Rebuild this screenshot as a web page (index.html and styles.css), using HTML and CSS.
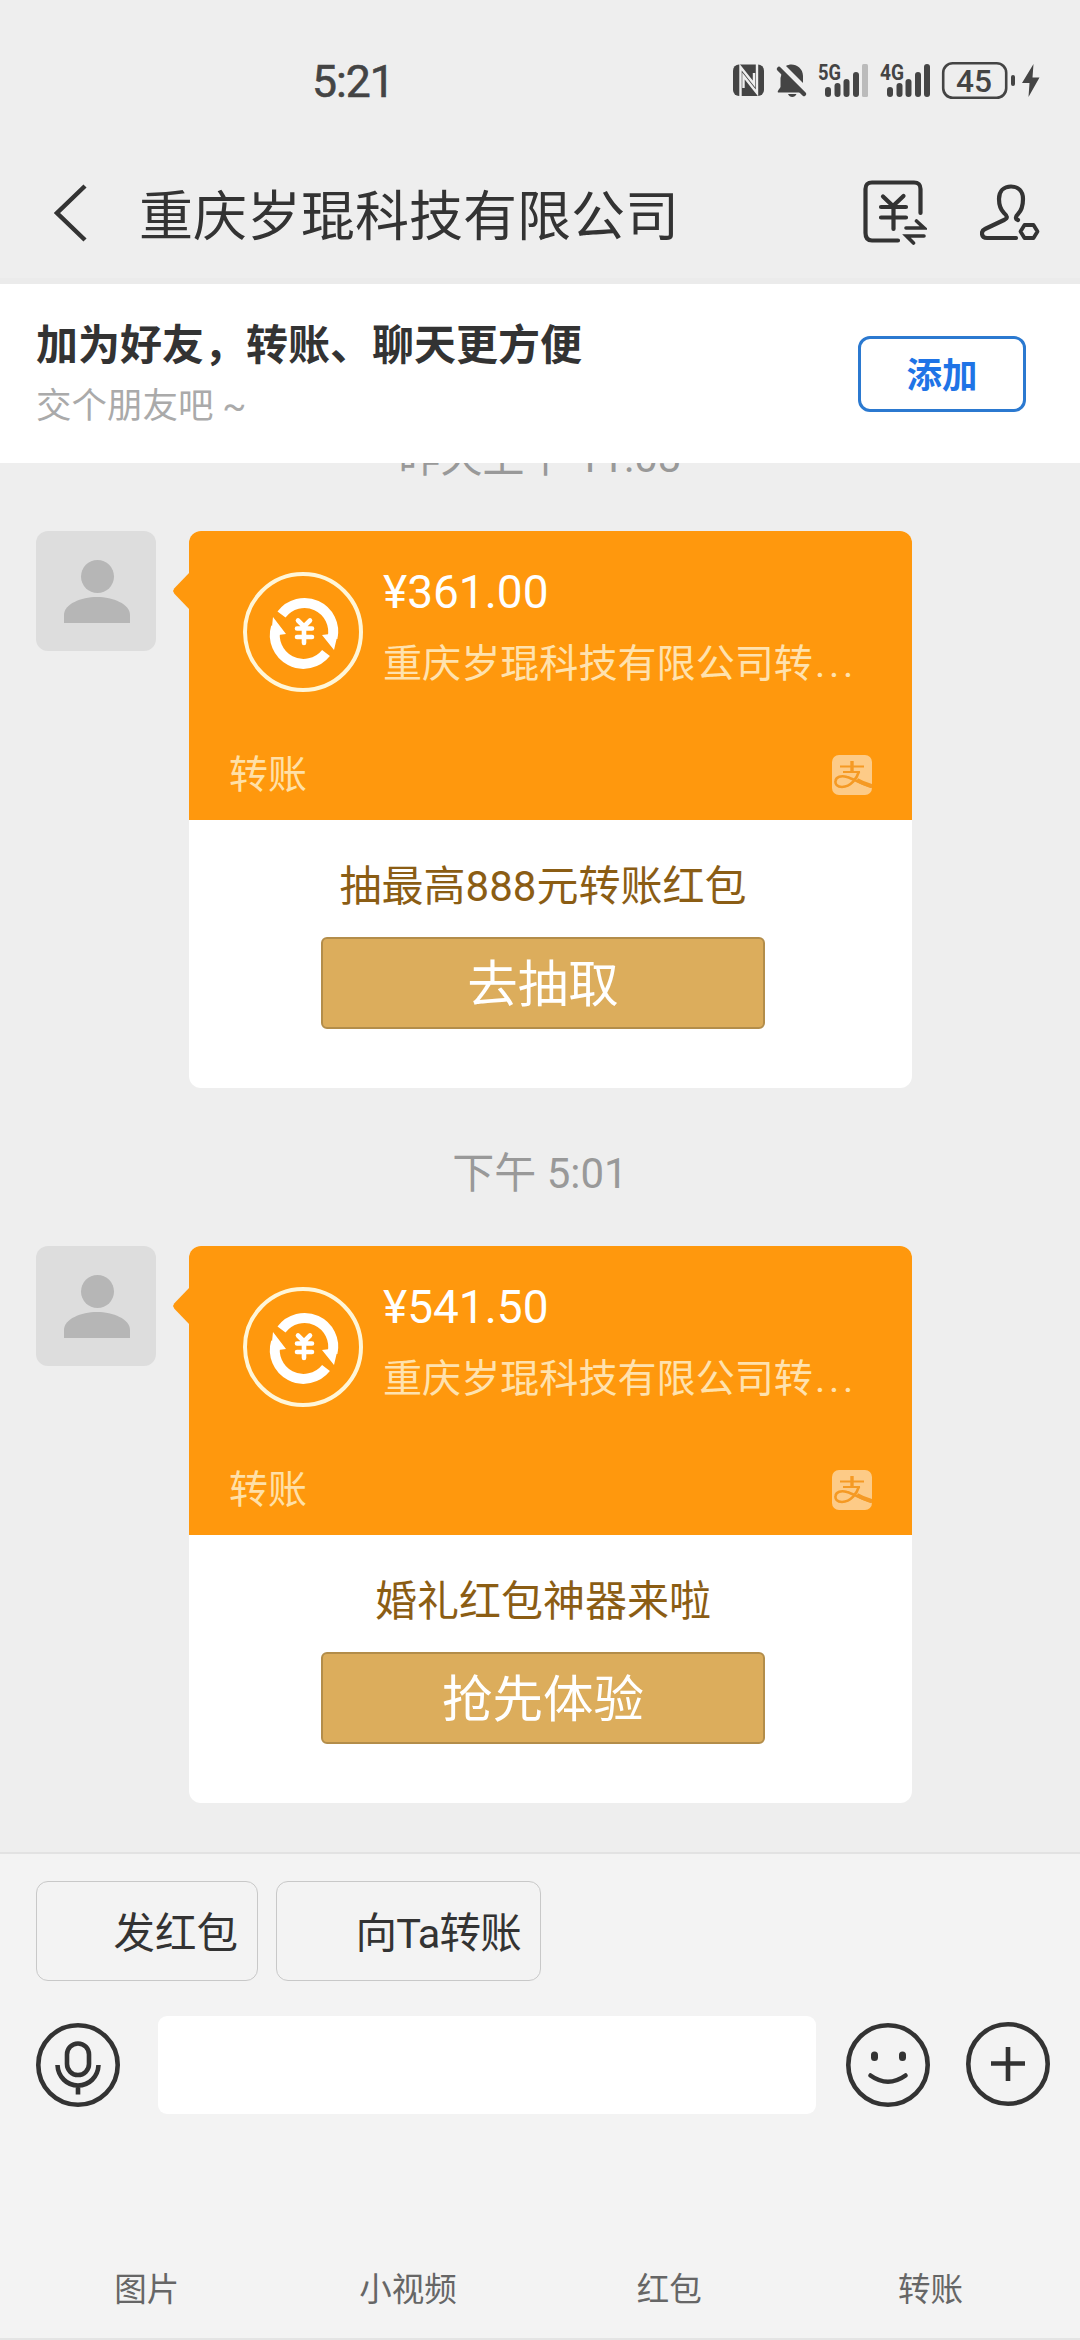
FILE: index.html
```html
<!DOCTYPE html>
<html lang="zh-CN">
<head>
<meta charset="utf-8">
<title>重庆岁琨科技有限公司</title>
<link rel="stylesheet" href="styles.css">
</head>
<body>
<svg class="defs" width="0" height="0">
  <symbol id="user" viewBox="0 0 120 120">
    <circle cx="61.500" cy="45.500" r="16.500"/>
    <path d="M28 92V84C28 73 45 66 61 66S94 73 94 84V92Z"/>
  </symbol>
  <symbol id="transfer" viewBox="0 0 120 120">
    <g fill="none" stroke="#fff">
      <circle cx="60" cy="60" r="58" stroke="#fff6d8" stroke-width="4"/>
      <path d="M38.500 42.500A28.700 28.700 0 0 1 89.500 66" stroke-width="10"/>
      <path d="M83 81A28.700 28.700 0 0 1 33 55" stroke-width="10"/>
      <path d="M55 48.500L61 54.500L67 48.500M54 56.500H69M54 65H69M61 55V71" stroke-width="4.600" stroke-linecap="round" stroke-linejoin="round"/>
    </g>
    <path d="M30 45L43 62L28 64ZM79 63L95 61L91 78Z" fill="#fff"/>
  </symbol>
  <symbol id="alipay" viewBox="0 0 40 40">
    <rect width="40" height="40" rx="7" fill="#fdcb87"/>
    <g fill="none" stroke="#f59a24" stroke-linecap="butt">
      <path d="M20 6V16" stroke-width="3.400"/>
      <path d="M8 11.500H32M11 17H28" stroke-width="2"/>
      <path d="M27 16.500C25 23 19 32 10 32C5 32 3 29 3.500 26C4 22 9 20 15 22C22 24 29 29 40 32" stroke-width="2.600"/>
      <path d="M25 25C30 28 34 29.500 40 31" stroke-width="4"/>
    </g>
  </symbol>
</svg>

<div class="screen">
  <div class="status">
    <time class="clock">5:21</time>
    <svg class="status-icons" viewBox="730 38 312 84" width="312" height="84">
      <g fill="#444">
        <rect x="733" y="64.500" width="31" height="31.500" rx="6"/>
        <path d="M778 92.500C777 91 779.500 89 780.500 87V78L782 72L796 86L802 92.500ZM786 66C792 62 803 66 803 76V83ZM788 94H796.500C795 98 789.500 98 788 94Z"/>
        <path d="M1033.500 64L1022 83H1029.500L1028.500 97L1039.500 77.500H1032.500Z"/>
        <rect x="1011" y="75" width="4" height="11" rx="2"/>
        <rect x="825" y="87" width="6" height="10" rx="3"/>
        <rect x="834.500" y="83" width="6" height="14" rx="3"/>
        <rect x="843.500" y="79" width="6" height="18" rx="3"/>
        <rect x="853" y="72" width="6" height="25" rx="3"/>
        <rect x="862" y="64" width="6" height="33" rx="1.500" fill="#bbb"/>
        <rect x="887" y="87" width="6" height="10" rx="3"/>
        <rect x="896.500" y="83" width="6" height="14" rx="3"/>
        <rect x="905.500" y="79" width="6" height="18" rx="3"/>
        <rect x="915" y="72" width="6" height="25" rx="3"/>
        <rect x="924" y="64" width="6" height="33" rx="3"/>
      </g>
      <g fill="none" stroke="#eee" stroke-width="2.400">
        <path d="M740.500 96V67L754 84V73"/>
        <path d="M757 64V93L743.500 76V88"/>
      </g>
      <path d="M779 69L804 94" stroke="#444" stroke-width="4.500" stroke-linecap="round"/>
      <rect x="943.200" y="63.200" width="63" height="34.600" rx="9.500" fill="none" stroke="#444" stroke-width="2.600"/>
      <text class="net" x="818" y="80" textLength="23" lengthAdjust="spacingAndGlyphs">5G</text>
      <text class="net" x="880" y="80" textLength="24" lengthAdjust="spacingAndGlyphs">4G</text>
      <text class="charge" x="956" y="92" textLength="36" lengthAdjust="spacingAndGlyphs">45</text>
    </svg>
  </div>

  <header class="nav">
    <svg class="back" width="34" height="58" viewBox="0 0 34 58"><path d="M31 2L3 29L31 56" fill="none" stroke="#333" stroke-width="4.500"/></svg>
    <h1>重庆岁琨科技有限公司</h1>
    <svg class="bill" width="64" height="66" viewBox="0 0 64 66" fill="none" stroke="#333" stroke-width="4.200" stroke-linecap="round">
      <path d="M57.500 33V9Q57.500 2.500 51 2.500H9Q2.500 2.500 2.500 9V53Q2.500 60.500 9 60.500H35"/>
      <path d="M20 16.500L30 26L40.500 16M18 27H43M18 37.500H43M30.500 26V49"/>
      <path d="M43 48H61L53.500 41M61 56H43.500L50.500 63" stroke-width="3.600"/>
    </svg>
    <svg class="contact" width="60" height="58" viewBox="0 0 60 58" fill="none" stroke="#333" stroke-width="4.200" stroke-linecap="round" stroke-linejoin="round">
      <path d="M36 54H7C1 54 .5 47 5 45L24 36C28 34 27.500 32 24 29C20 25 19 21 19 15C19 7 24 2.500 31 2.500S43 7 43 15C43 22 42 26 38 30C35 33 35.500 35 38 36"/>
      <path d="M44.500 41H53.500L57.500 47.500L53.500 54H44.500L40.500 47.500Z" stroke-width="3.800"/>
    </svg>
  </header>

  <section class="banner">
    <div>
      <h2>加为好友，转账、聊天更方便</h2>
      <p>交个朋友吧 ~</p>
    </div>
    <button class="add">添加</button>
  </section>

  <main class="chat">
    <div class="stamp">昨天上午 11:03</div>
    <article class="message">
      <svg class="avatar"><use href="#user"/></svg>
      <div class="card">
        <div class="pay">
          <div class="pay-main">
            <svg class="coin"><use href="#transfer"/></svg>
            <div class="pay-text">
              <div class="amount">¥361.00</div>
              <div class="desc">重庆岁琨科技有限公司转<span class="dots">...</span></div>
            </div>
          </div>
          <div class="pay-foot"><span>转账</span><svg class="brand"><use href="#alipay"/></svg></div>
        </div>
        <div class="promo"><p>抽最高888元转账红包</p><button>去抽取</button></div>
      </div>
    </article>
    <div class="stamp">下午 5:01</div>
    <article class="message">
      <svg class="avatar"><use href="#user"/></svg>
      <div class="card">
        <div class="pay">
          <div class="pay-main">
            <svg class="coin"><use href="#transfer"/></svg>
            <div class="pay-text">
              <div class="amount">¥541.50</div>
              <div class="desc">重庆岁琨科技有限公司转<span class="dots">...</span></div>
            </div>
          </div>
          <div class="pay-foot"><span>转账</span><svg class="brand"><use href="#alipay"/></svg></div>
        </div>
        <div class="promo"><p>婚礼红包神器来啦</p><button>抢先体验</button></div>
      </div>
    </article>
  </main>

  <footer class="composer">
    <div class="quick"><button>发红包</button><button>向Ta转账</button></div>
    <div class="entry">
      <svg width="84" height="84" viewBox="0 0 84 84" fill="none" stroke="#333" stroke-width="4.600">
        <circle cx="42" cy="42" r="39.700"/>
        <rect x="31" y="20.500" width="22" height="31.500" rx="11"/>
        <path d="M21.500 42C22 54 31 62.500 42 62.500S62 54 62.500 42M42 62V71.500"/>
      </svg>
      <div class="field"></div>
      <svg width="84" height="84" viewBox="0 0 84 84" fill="none" stroke="#333" stroke-width="4.600">
        <circle cx="42" cy="42" r="39.700"/>
        <path d="M28.500 32V34.500M56.500 32V34.500" stroke-width="7" stroke-linecap="round"/>
        <path d="M24.500 52.500Q42 65 59.500 52.500" stroke-linecap="round"/>
      </svg>
      <svg class="plus" width="84" height="84" viewBox="0 0 84 84" fill="none" stroke="#333" stroke-width="4.600">
        <circle cx="42" cy="42" r="39.700"/><path d="M25 41.500H59M42 25V59"/>
      </svg>
    </div>
    <nav class="tools"><span>图片</span><span>小视频</span><span>红包</span><span>转账</span></nav>
  </footer>
</div>
</body>
</html>
```
FILE: styles.css
```css
* { box-sizing: border-box; }
body, h1, h2, p { margin: 0; font-weight: 400; }
body { background: #eee; font-family: Roboto, "Noto Sans CJK SC", sans-serif; color: #333; }
button { margin: 0; padding: 0; font: inherit; color: inherit; background: none; }
svg { display: block; flex: none; }
.defs { position: absolute; }
.screen { width: 1080px; height: 2340px; display: flex; flex-direction: column; overflow: hidden; }

.status { height: 148px; padding: 38px 38px 0 312px; display: flex; justify-content: space-between; align-items: flex-start; }
.clock { margin-top: 22px; font-size: 44.500px; line-height: 44px; color: #444; letter-spacing: -1px; -webkit-text-stroke: .6px #444; }
.net { font: 700 22px Roboto, sans-serif; fill: #444; }
.charge { font: 500 32px Roboto, sans-serif; fill: #444; }

.nav { height: 136px; padding: 0 40px 0 54px; display: flex; align-items: center; border-bottom: 6px solid #ebebeb; }
.nav h1 { margin-left: 51px; padding-top: 9px; font-size: 54px; line-height: 64px; flex: 1; }
.bill { margin-right: 53px; }

.banner { height: 179px; padding: 38px 54px 0 36px; display: flex; justify-content: space-between; background: #fff; }
.banner h2 { font-size: 42px; line-height: 48px; font-weight: 700; }
.banner p { margin-top: 12px; font-size: 35.500px; line-height: 48px; color: #aaa; }
.add { width: 168px; height: 76px; margin-top: 14px; padding-top: 4px; border: 3px solid #2b79d0; border-radius: 12px; color: #1f74e6; font-size: 35.500px; font-weight: 700; line-height: 64px; }

.chat { height: 1389px; overflow: hidden; }
.stamp { height: 158px; line-height: 60px; padding-top: 56px; text-align: center; font-size: 42px; color: #999; }
.stamp:first-child { height: 103px; margin-top: -35px; padding-top: 0; }
.message { display: flex; padding-left: 36px; gap: 33px; align-items: flex-start; }
.avatar { width: 120px; height: 120px; border-radius: 12px; background: #ddd; fill: #b6b6b6; }
.card { position: relative; width: 723px; height: 557px; border-radius: 12px; background: #fff; }
.card::before { content: ""; position: absolute; left: -16px; top: 41px; width: 17px; height: 38px; background: #ff980d; clip-path: polygon(100% 0, 8% 43%, 0 50%, 8% 57%, 100% 100%); }
.pay { height: 289px; padding: 41px 40px 0 54px; border-radius: 12px 12px 0 0; background: #ff980d; }
.pay-main { height: 165px; display: flex; gap: 20px; }
.coin { width: 120px; height: 120px; }
.pay-text { width: 480px; }
.amount { height: 40px; line-height: 40px; font-size: 46px; color: #fff; }
.desc { margin-top: 22px; line-height: 60px; font-size: 39.100px; color: #ffe2ae; white-space: nowrap; }
.dots { letter-spacing: 3.700px; margin-left: 2px; }
.pay-foot { margin-left: -14px; height: 76px; display: flex; justify-content: space-between; align-items: center; font-size: 39px; line-height: 60px; color: #ffe0a8; }
.brand { width: 40px; height: 40px; }
.promo { padding: 38px 15px 0 0; display: flex; flex-direction: column; align-items: center; color: #8b5d14; }
.promo p { font-size: 42px; line-height: 58px; }
.promo button { width: 444px; height: 92px; margin-top: 21px; padding-top: 4px; border: 2px solid #b38d4a; border-radius: 6px; background: #dcad5c; color: #fff; font-size: 50.500px; line-height: 84px; }

.composer { flex: 1; padding: 27px 30px 0 36px; background: #f3f3f3; border-top: 2px solid #e2e2e2; border-bottom: 2px solid #e4e4e4; }
.quick { display: flex; gap: 18px; }
.quick button { height: 100px; width: 222px; padding: 6px 19px 0 0; border: 1px solid #c8c8c8; border-radius: 12px; font-size: 41.500px; line-height: 60px; text-align: right; }
.quick button + button { width: 265px; letter-spacing: -.8px; }
.entry { margin-top: 35px; height: 98px; display: flex; align-items: center; }
.field { width: 658px; height: 98px; margin: 0 30px 0 38px; border-radius: 9px; background: #fff; }
.plus { margin: -2px 0 0 36px; }
.tools { margin: 152px -12px 0 -20px; display: grid; grid-template-columns: repeat(4, 261.300px); text-align: center; font-size: 32.500px; line-height: 48px; color: #666; }
```
